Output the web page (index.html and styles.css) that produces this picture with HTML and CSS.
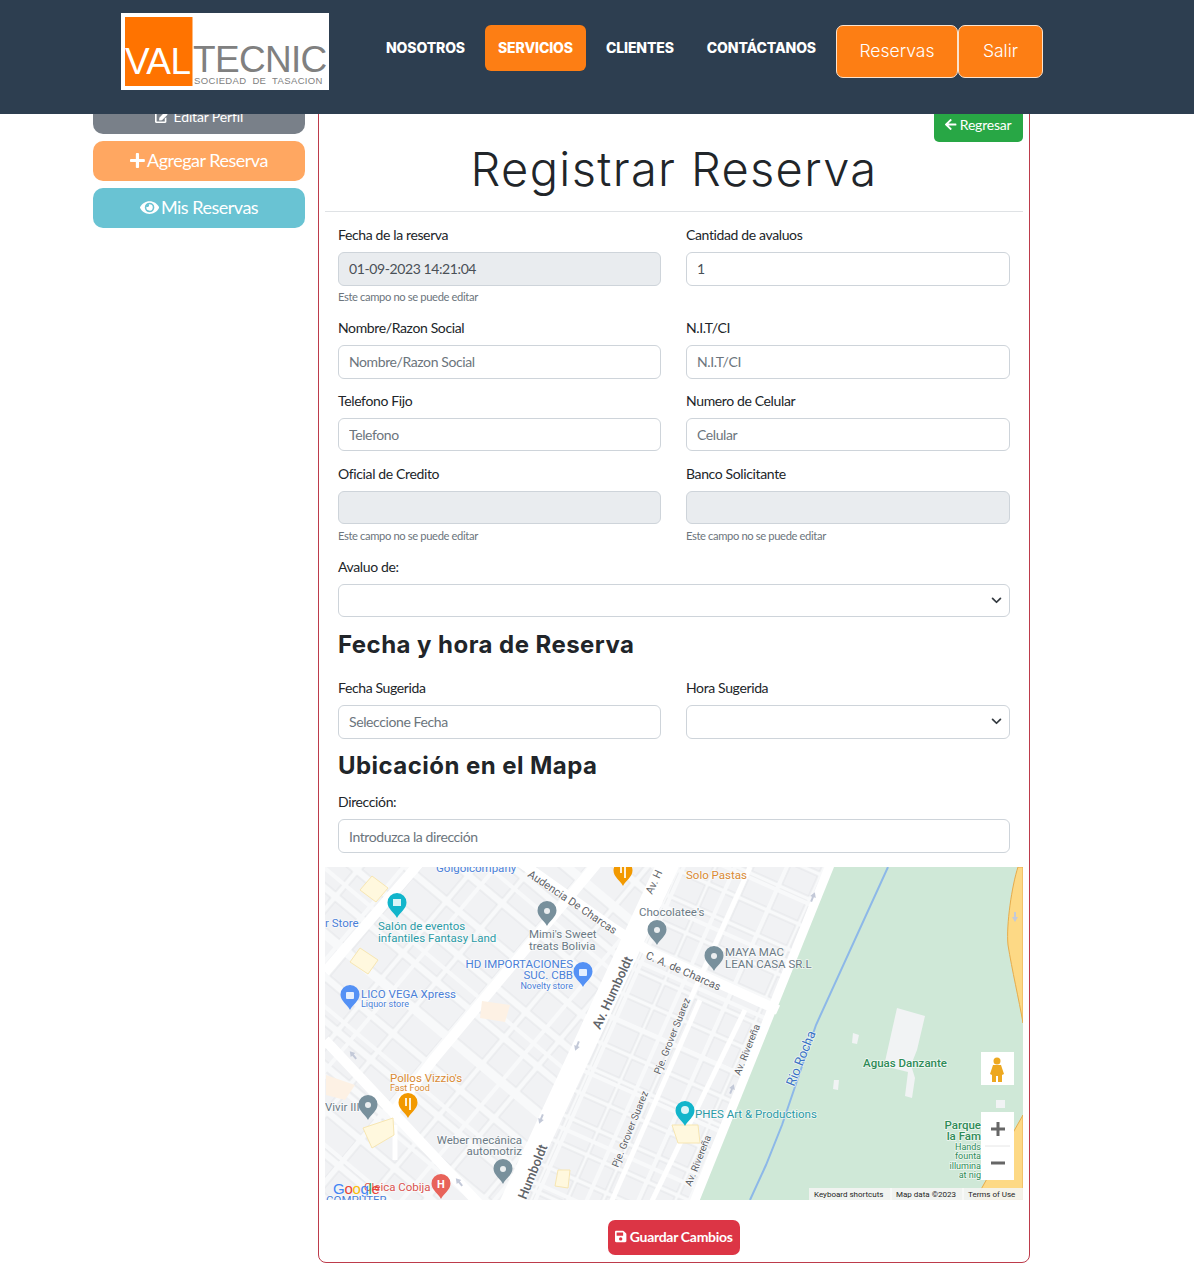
FILE: index.html
```html
<!DOCTYPE html>
<html lang="es">
<head>
<meta charset="utf-8">
<title>Registrar Reserva</title>
<link rel="stylesheet" href="styles.css">
</head>
<body>
<header class="topbar">
  <a class="logo" href="#">
    <span class="logo-mark">VAL</span>
    <span class="logo-word"><span class="logo-name">TECNIC</span><span class="logo-sub">SOCIEDAD DE TASACION</span></span>
  </a>
  <nav class="nav">
    <a class="nav-link" href="#">NOSOTROS</a>
    <a class="nav-link nav-active" href="#">SERVICIOS</a>
    <a class="nav-link" href="#">CLIENTES</a>
    <a class="nav-link" href="#">CONTÁCTANOS</a>
  </nav>
  <div class="session">
    <a class="session-btn session-wide" href="#">Reservas</a>
    <a class="session-btn session-narrow" href="#">Salir</a>
  </div>
</header>

<div class="layout">
  <aside class="sidebar">
    <a class="side-btn side-gray side-small" href="#"><svg class="ico" viewBox="0 0 576 512"><path d="M402.6 83.2l90.2 90.2c3.8 3.8 3.8 10 0 13.8L274.4 405.6l-92.8 10.3c-12.4 1.4-22.9-9.1-21.5-21.5l10.3-92.8L388.8 83.2c3.8-3.8 10-3.8 13.8 0zm162-22.9l-48.8-48.8c-15.2-15.2-39.9-15.2-55.2 0l-35.4 35.4c-3.8 3.8-3.8 10 0 13.8l90.2 90.2c3.8 3.8 10 3.8 13.8 0l35.4-35.4c15.2-15.3 15.2-40 0-55.2zM384 346.2V448H64V128h229.8c3.2 0 6.2-1.3 8.5-3.5l40-40c7.6-7.6 2.2-20.5-8.5-20.5H48C21.5 64 0 85.5 0 112v352c0 26.5 21.5 48 48 48h352c26.5 0 48-21.5 48-48V306.2c0-10.7-12.9-16-20.5-8.5l-40 40c-2.2 2.3-3.5 5.3-3.5 8.5z"/></svg>Editar Perfil</a>
    <a class="side-btn side-orange" href="#"><svg class="ico" viewBox="0 0 448 512"><path d="M416 208H272V64c0-17.67-14.33-32-32-32h-32c-17.67 0-32 14.33-32 32v144H32c-17.67 0-32 14.33-32 32v32c0 17.67 14.33 32 32 32h144v144c0 17.67 14.33 32 32 32h32c17.67 0 32-14.33 32-32V304h144c17.67 0 32-14.33 32-32v-32c0-17.67-14.33-32-32-32z"/></svg>Agregar Reserva</a>
    <a class="side-btn side-teal" href="#"><svg class="ico" viewBox="0 0 576 512"><path d="M572.52 241.4C518.29 135.59 410.93 64 288 64S57.68 135.64 3.48 241.41a32.35 32.35 0 0 0 0 29.19C57.71 376.41 165.07 448 288 448s230.32-71.64 284.52-177.41a32.35 32.35 0 0 0 0-29.19zM288 400a144 144 0 1 1 144-144 143.93 143.93 0 0 1-144 144zm0-240a95.31 95.31 0 0 0-25.31 3.79 47.85 47.85 0 0 1-66.9 66.9A95.78 95.78 0 1 0 288 160z"/></svg>Mis Reservas</a>
  </aside>

  <main class="card">
    <div class="card-top">
      <a class="back-btn" href="#"><svg class="ico" viewBox="0 0 448 512"><path d="M257.5 445.1l-22.2 22.2c-9.4 9.4-24.6 9.4-33.9 0L7 273c-9.4-9.4-9.4-24.6 0-33.9L201.4 44.7c9.4-9.4 24.6-9.4 33.9 0l22.2 22.2c9.5 9.5 9.3 25-.4 34.3L136.6 216H424c13.3 0 24 10.7 24 24v32c0 13.3-10.7 24-24 24H136.6l120.5 114.8c9.8 9.3 10 24.8.4 34.3z"/></svg>Regresar</a>
    </div>
    <h1 class="title">Registrar Reserva</h1>
    <hr class="rule">
    <form class="fields">
      <div class="grid">
        <div class="field">
          <label class="label">Fecha de la reserva</label>
          <input class="input" type="text" value="01-09-2023 14:21:04" readonly>
          <small class="help">Este campo no se puede editar</small>
        </div>
        <div class="field">
          <label class="label">Cantidad de avaluos</label>
          <input class="input" type="text" value="1">
        </div>
        <div class="field">
          <label class="label">Nombre/Razon Social</label>
          <input class="input" type="text" placeholder="Nombre/Razon Social">
        </div>
        <div class="field">
          <label class="label">N.I.T/CI</label>
          <input class="input" type="text" placeholder="N.I.T/CI">
        </div>
        <div class="field">
          <label class="label">Telefono Fijo</label>
          <input class="input" type="text" placeholder="Telefono">
        </div>
        <div class="field">
          <label class="label">Numero de Celular</label>
          <input class="input" type="text" placeholder="Celular">
        </div>
        <div class="field">
          <label class="label">Oficial de Credito</label>
          <input class="input" type="text" readonly>
          <small class="help">Este campo no se puede editar</small>
        </div>
        <div class="field">
          <label class="label">Banco Solicitante</label>
          <input class="input" type="text" readonly>
          <small class="help">Este campo no se puede editar</small>
        </div>
      </div>
      <div class="field">
        <label class="label">Avaluo de:</label>
        <select class="input select"><option></option></select>
      </div>
      <h2 class="subhead subhead-first">Fecha y hora de Reserva</h2>
      <div class="grid">
        <div class="field">
          <label class="label">Fecha Sugerida</label>
          <input class="input" type="text" placeholder="Seleccione Fecha">
        </div>
        <div class="field">
          <label class="label">Hora Sugerida</label>
          <select class="input select"><option></option></select>
        </div>
      </div>
      <h2 class="subhead">Ubicación en el Mapa</h2>
      <div class="field field-last">
        <label class="label">Dirección:</label>
        <input class="input" type="text" placeholder="Introduzca la dirección">
      </div>
    </form>

    <div class="map">
      <svg class="map-svg" viewBox="325 867 698 333" role="img" aria-label="Mapa">
        <defs>
          <pattern id="blocksA" width="44" height="34" patternUnits="userSpaceOnUse" patternTransform="rotate(40 325 867)">
            <rect x="3" y="3" width="38" height="26" class="bld"/>
          </pattern>
          <pattern id="cutsA" width="71" height="53" patternUnits="userSpaceOnUse" patternTransform="rotate(40 325 867)">
            <path d="M0 20H71M30 0V53" class="cut"/>
          </pattern>
          <pattern id="blocksB" width="33" height="27" patternUnits="userSpaceOnUse" patternTransform="rotate(24 700 1000)">
            <rect x="2" y="2" width="29" height="22" class="bld"/>
          </pattern>
          <pattern id="cutsB" width="47" height="61" patternUnits="userSpaceOnUse" patternTransform="rotate(24 700 1000)">
            <path d="M0 14H47M20 0V61" class="cut"/>
          </pattern>
          <clipPath id="mapClip"><rect x="325" y="867" width="698" height="333"/></clipPath>
          <path id="pin" d="M0-12a9.5 9.5 0 0 0-9.5 9.5C-9.5 4-2.5 7.5 0 13 2.5 7.5 9.5 4 9.5-2.5A9.5 9.5 0 0 0 0-12z"/>
          <path id="arrow" d="M0-5L3 0H1V5H-1V0H-3Z"/>
        </defs>
        <g clip-path="url(#mapClip)">
          <rect x="325" y="867" width="698" height="333" class="land"/>
          <polygon points="325,867 680,867 520,1200 325,1200" fill="url(#blocksA)"/>
          <polygon points="325,867 680,867 520,1200 325,1200" fill="url(#cutsA)"/>
          <polygon points="660,867 835,867 700,1200 515,1200" fill="url(#blocksB)"/>
          <polygon points="660,867 835,867 700,1200 515,1200" fill="url(#cutsB)"/>
          <polygon points="832,867 1023,867 1023,1200 695,1200" class="park"/>
          <path d="M1018 867C1012 885 1006 925 1008 945C1012 970 1019 1000 1023 1023V867Z" class="sand"/>
          <path d="M1023 1115L975 1200H1023Z" class="sand"/>
          <path d="M888 867L816 1025L782 1125L766 1165L750 1200" class="river"/>
          <polygon points="897,1008 925,1016 917,1050 911,1065 915,1078 912,1098 905,1096 908,1072 884,1066" class="plaza"/>
          <polygon points="853,1033 859,1035 857,1044 852,1043" class="plaza"/>
          <polygon points="834,1080 839,1080 838,1090 833,1089" class="plaza"/>
          <rect x="996" y="1100" width="9" height="8" class="plaza"/>
          <g class="roads">
            <path d="M670 860L510 1205" class="road-xl"/>
            <path d="M832 860L693 1205" class="road-l"/>
            <path d="M520 862L613 928L650 952L778 1010" class="road-m"/>
            <path d="M600 860L433 1060L395 1110" class="road-m"/>
            <path d="M422 860L325 972" class="road-m"/>
            <path d="M325 1040L480 1205" class="road-m"/>
            <path d="M700 1000L610 1205" class="road-s"/>
            <path d="M745 1010L650 1205" class="road-s"/>
            <path d="M395 1125V1160" class="road-s"/>
            <path d="M750 867L690 1000" class="road-s"/>
          </g>
          <g class="lots">
            <polygon points="372,876 388,888 376,902 360,890"/>
            <polygon points="360,948 378,960 368,974 350,962"/>
            <polygon points="363,1128 393,1118 394,1135 372,1148"/>
            <polygon points="672,1125 698,1125 700,1143 678,1143"/>
            <polygon points="558,1170 570,1170 568,1188 555,1186"/>
          </g>
          <g class="tan">
            <polygon points="482,1001 510,1005 505,1022 480,1018"/>
            <polygon points="326,1075 355,1085 345,1100 326,1095"/>
          </g>
          <g class="arrows">
            <use href="#arrow" transform="translate(813 897) rotate(22)"/>
            <use href="#arrow" transform="translate(1015 917) rotate(180)"/>
            <use href="#arrow" transform="translate(577 1046) rotate(202)"/>
            <use href="#arrow" transform="translate(541 1119) rotate(202)"/>
            <use href="#arrow" transform="translate(353 1055) rotate(-40)"/>
            <use href="#arrow" transform="translate(459 1182) rotate(-40)"/>
            <use href="#arrow" transform="translate(732 1089) rotate(22)"/>
          </g>

          <text class="t t-blue" x="436" y="872">Golgoicompany</text>
          <text class="t t-blue" x="325" y="927">r Store</text>
          <text class="t t-teal" x="378" y="930">Salón de eventos</text>
          <text class="t t-teal" x="378" y="942">infantiles Fantasy Land</text>
          <text class="t t-gray" x="529" y="938">Mimi's Sweet</text>
          <text class="t t-gray" x="529" y="950">treats Bolivia</text>
          <text class="t t-blue" x="573" y="968" text-anchor="end">HD IMPORTACIONES</text>
          <text class="t t-blue" x="573" y="979" text-anchor="end">SUC. CBB</text>
          <text class="t-xs t-blue" x="573" y="989" text-anchor="end">Novelty store</text>
          <text class="t t-blue" x="361" y="998">LICO VEGA Xpress</text>
          <text class="t-xs t-blue" x="361" y="1007">Liquor store</text>
          <text class="t t-orange" x="686" y="879">Solo Pastas</text>
          <text class="t t-gray" x="639" y="916">Chocolatee's</text>
          <text class="t t-gray" x="725" y="956">MAYA MAC</text>
          <text class="t t-gray" x="725" y="968">LEAN CASA SR.L</text>
          <text class="t t-orange" x="390" y="1082">Pollos Vizzio's</text>
          <text class="t-xs t-orange" x="390" y="1091">Fast Food</text>
          <text class="t t-gray" x="325" y="1111">Vivir III</text>
          <text class="t t-gray" x="522" y="1144" text-anchor="end">Weber mecánica</text>
          <text class="t t-gray" x="522" y="1155" text-anchor="end">automotriz</text>
          <text class="t t-red" x="364" y="1191">Cleica Cobija</text>
          <text class="t t-teal" x="695" y="1118">PHES Art &amp; Productions</text>
          <text class="t t-green t-bold" x="863" y="1067">Aguas Danzante</text>
          <text class="t t-green t-bold" x="981" y="1129" text-anchor="end">Parque</text>
          <text class="t t-green t-bold" x="981" y="1140" text-anchor="end">la Fam</text>
          <text class="t-xs t-green" x="981" y="1150" text-anchor="end">Hands</text>
          <text class="t-xs t-green" x="981" y="1159" text-anchor="end">founta</text>
          <text class="t-xs t-green" x="981" y="1169" text-anchor="end">illumina</text>
          <text class="t-xs t-green" x="981" y="1178" text-anchor="end">at nig</text>

          <text class="t-road" transform="translate(527 876) rotate(34)">Audencia De Charcas</text>
          <text class="t-road" transform="translate(652 895) rotate(-65)">Av. H</text>
          <text class="t-road" transform="translate(645 958) rotate(24)">C. A. de Charcas</text>
          <text class="t-road-b" transform="translate(600 1030) rotate(-65)">Av. Humboldt</text>
          <text class="t-road-b" transform="translate(526 1200) rotate(-68)">Humboldt</text>
          <text class="t-road t-sm" transform="translate(660 1075) rotate(-68)">Pje. Grover Suarez</text>
          <text class="t-road t-sm" transform="translate(618 1168) rotate(-68)">Pje. Grover Suarez</text>
          <text class="t-road t-sm" transform="translate(740 1076) rotate(-68)">Av. Rivereña</text>
          <text class="t-road t-sm" transform="translate(691 1187) rotate(-68)">Av. Rivereña</text>
          <text class="t-river" transform="translate(794 1087) rotate(-68)">Rio Rocha</text>

          <use href="#pin" x="397" y="905" class="p-teal"/>
          <rect x="393" y="899" width="8" height="7" class="p-dot"/>
          <use href="#pin" x="547" y="913" class="p-gray"/>
          <circle cx="547" cy="911" r="3" class="p-dot"/>
          <use href="#pin" x="657" y="932" class="p-gray"/>
          <circle cx="657" cy="930" r="3" class="p-dot"/>
          <use href="#pin" x="714" y="958" class="p-gray"/>
          <circle cx="714" cy="956" r="3" class="p-dot"/>
          <use href="#pin" x="583" y="974" class="p-blue"/>
          <rect x="579" y="969" width="8" height="7" rx="1" class="p-dot"/>
          <use href="#pin" x="350" y="997" class="p-blue"/>
          <rect x="346" y="992" width="8" height="7" rx="1" class="p-dot"/>
          <use href="#pin" x="623" y="873" class="p-orange"/>
          <path d="M621 865V873M625 865V878" class="p-fork"/>
          <use href="#pin" x="408" y="1105" class="p-orange"/>
          <path d="M406 1098V1106M410 1098V1110" class="p-fork"/>
          <use href="#pin" x="368" y="1107" class="p-gray"/>
          <circle cx="368" cy="1105" r="3" class="p-dot"/>
          <use href="#pin" x="503" y="1171" class="p-gray"/>
          <circle cx="503" cy="1169" r="3" class="p-dot"/>
          <use href="#pin" x="441" y="1186" class="p-red"/>
          <text class="p-h" x="441" y="1188" text-anchor="middle">H</text>
          <use href="#pin" x="685" y="1113" class="p-teal"/>
          <circle cx="685" cy="1110" r="4" class="p-dot"/>

          <text class="g-logo" x="333" y="1194"><tspan class="g-b">G</tspan><tspan class="g-r">o</tspan><tspan class="g-y">o</tspan><tspan class="g-b">g</tspan><tspan class="g-g">l</tspan><tspan class="g-r">e</tspan></text>
          <text class="t t-blue" x="326" y="1204">COMPUTER</text>

          <rect x="809" y="1188" width="214" height="12" class="attr"/>
          <text class="t-attr" x="814" y="1197">Keyboard shortcuts</text>
          <text class="t-attr" x="896" y="1197">Map data ©2023</text>
          <text class="t-attr" x="968" y="1197">Terms of Use</text>
          <path d="M891 1188V1200M963 1188V1200" class="attr-sep"/>

          <rect x="981" y="1052" width="33" height="33" class="ctl"/>
          <g class="peg">
            <circle cx="997" cy="1061" r="3.5"/>
            <path d="M993 1065H1001L1004 1074L1002 1075V1082H998V1076H996V1082H992V1075L990 1074Z"/>
          </g>
          <rect x="981" y="1112" width="33" height="68" class="ctl"/>
          <path d="M985 1146H1010" class="ctl-sep"/>
          <path d="M998 1122V1136M991 1129H1005M991 1163H1005" class="ctl-ico"/>
        </g>
      </svg>
    </div>

    <div class="actions">
      <button class="save-btn" type="button"><svg class="ico" viewBox="0 0 448 512"><path d="M433.941 129.941l-83.882-83.882A48 48 0 0 0 316.118 32H48C21.49 32 0 53.49 0 80v352c0 26.51 21.49 48 48 48h352c26.51 0 48-21.49 48-48V163.882a48 48 0 0 0-14.059-33.941zM224 416c-35.346 0-64-28.654-64-64 0-35.346 28.654-64 64-64s64 28.654 64 64c0 35.346-28.654 64-64 64zm96-304.52V212c0 6.627-5.373 12-12 12H76c-6.627 0-12-5.373-12-12V108c0-6.627 5.373-12 12-12h228.52c3.183 0 6.235 1.264 8.485 3.515l3.48 3.48A11.996 11.996 0 0 1 320 111.48z"/></svg>Guardar Cambios</button>
    </div>
  </main>
</div>
</body>
</html>
```
FILE: styles.css
```css
* { box-sizing: border-box; }
html, body { margin: 0; padding: 0; }
body { font-family: Lato, "Liberation Sans", sans-serif; font-size: 14px; line-height: 1.5; color: #212529; background: #fff; }
a { text-decoration: none; color: inherit; }

.topbar { position: fixed; top: 0; left: 0; right: 0; height: 114px; background: #2d3e50; display: flex; align-items: flex-start; padding-left: 121px; z-index: 10; }
.logo { margin-top: 13px; width: 208px; height: 77px; background: #fff; display: flex; padding: 4px 2px 4px 4px; flex: none; overflow: hidden; }
.logo-mark { width: 68px; height: 69px; background: #ff7300; color: #fff; font-family: "Liberation Sans", sans-serif; font-size: 37px; line-height: 1; padding-top: 26px; letter-spacing: -0.6px; border-right: 1px solid #fdba80; flex: none; font-weight: 400; }
.logo-word { display: flex; flex-direction: column; color: #808080; font-family: "Liberation Sans", sans-serif; }
.logo-name { font-size: 37px; line-height: 1; padding-top: 24px; letter-spacing: -0.7px; white-space: nowrap; }
.logo-sub { font-size: 9.5px; line-height: 1; letter-spacing: 0.35px; white-space: nowrap; margin-top: -2px; margin-left: 1px; word-spacing: 3px; }

.nav { display: flex; align-items: center; margin-left: 44px; margin-top: 25px; height: 46px; }
.nav-link { font-family: Inter, sans-serif; font-weight: 800; font-size: 14px; color: #fff; padding: 0 13px 2px; height: 46px; display: flex; align-items: center; border-radius: 6px; letter-spacing: -0.12px; margin-right: 7px; }
.nav-active { background: #fd7e14; }
.session { display: flex; margin-top: 25px; }
.session-btn { font-family: Inter, sans-serif; font-weight: 300; font-size: 17.5px; color: #fff; background: #fd7e14; border: 1px solid #fbe3cd; border-radius: 7px; height: 53px; display: flex; align-items: center; justify-content: center; }
.session-wide { width: 122px; }
.session-narrow { width: 85px; }

.layout { display: flex; gap: 13px; padding: 94px 0 16px 93px; align-items: flex-start; }
.sidebar { width: 212px; flex: none; display: flex; flex-direction: column; gap: 7px; }
.side-btn { height: 40px; border-radius: 10px; color: #fff; display: flex; align-items: center; justify-content: center; font-size: 18px; letter-spacing: -0.5px; padding-bottom: 2px; }
.side-btn .ico { height: 17px; width: auto; margin-right: 2px; fill: #fff; }
.side-small { font-size: 14px; letter-spacing: -0.15px; padding: 4px 0 0; }
.side-small .ico { height: 13px; margin-right: 4px; }
.side-gray { background: #798089; }
.side-orange { background: #ffa761; }
.side-teal { background: #69c3d3; }

.card { width: 712px; flex: none; margin-top: 5px; border: 1px solid #bd3b4b; border-radius: 8px; padding: 8px 6px 7px; }
.card-top { display: flex; justify-content: flex-end; height: 34px; }
.back-btn { height: 34px; padding: 0 11.5px 2px; background: #28a745; color: #fff; border-radius: 5px; display: flex; align-items: center; font-size: 14px; letter-spacing: -0.2px; }
.back-btn .ico, .save-btn .ico { height: 13px; width: auto; margin-right: 3px; fill: #fff; }
.title { margin: 0; text-align: center; font-family: Inter, sans-serif; font-weight: 300; font-size: 47px; line-height: 54px; color: #212529; letter-spacing: 1.35px; }
.rule { margin: 15px 0 0; border: 0; border-top: 1px solid #dfe2e5; }

.fields { padding: 12px 13px 14px; }
.grid { display: grid; grid-template-columns: 323px 324px; column-gap: 25px; }
.field { margin-bottom: 11.3px; }
.field-last { margin-bottom: 0; }
.label { display: block; margin-bottom: 7px; font-size: 14px; line-height: 21px; letter-spacing: -0.37px; }
.input { display: block; width: 100%; height: 33.5px; padding: 5px 10px; font-family: Lato, sans-serif; font-size: 14px; line-height: 21px; letter-spacing: -0.4px; color: #495057; background: #fff; border: 1px solid #ced4da; border-radius: 6px; outline: 0; }
.input::placeholder { color: #6c757d; opacity: 1; }
.input[readonly] { background: #e9ecef; }
.select { appearance: none; background-image: url("data:image/svg+xml,%3Csvg xmlns='http://www.w3.org/2000/svg' viewBox='0 0 12 8'%3E%3Cpath d='M1.5 1.5L6 6l4.5-4.5' fill='none' stroke='%23343a40' stroke-width='2' stroke-linecap='round' stroke-linejoin='round'/%3E%3C/svg%3E"); background-repeat: no-repeat; background-position: right 7px center; background-size: 11px 7px; }
.help { display: block; margin-top: 3.5px; font-size: 11.2px; line-height: 16.8px; color: #6c757d; letter-spacing: -0.37px; }
.subhead { margin: 0 0 11px; padding-top: 1.5px; font-family: Inter, sans-serif; font-weight: 700; font-size: 24px; line-height: 29px; color: #212529; letter-spacing: 0.45px; }
.subhead-first { margin-bottom: 18px; }

.map { height: 333px; }
.map-svg { display: block; width: 698px; height: 333px; }
.land { fill: #f8f9fa; }
.bld { fill: #f1f2f4; stroke: #e3e5e8; stroke-width: 1; }
.cut { fill: none; stroke: #f8f9fa; stroke-width: 4; }
.park { fill: #cfe8d7; }
.sand { fill: #fdd985; stroke: #e6ac4c; stroke-width: 1; }
.river { fill: none; stroke: #8db8e8; stroke-width: 2; }
.plaza { fill: #f1f3f4; }
.roads path { fill: none; stroke: #fff; }
.road-xl { stroke-width: 22; }
.road-l { stroke-width: 9; }
.road-m { stroke-width: 10; }
.road-s { stroke-width: 5; }
.lots polygon { fill: #fff8de; stroke: #f7e6b2; }
.tan polygon { fill: #fdf1e4; }
.arrows use { fill: #c3c9d8; }

.t { font-family: Roboto, sans-serif; font-size: 11.5px; }
.t-xs { font-family: Roboto, sans-serif; font-size: 9px; }
.t, .t-xs, .t-road, .t-road-b, .t-river { paint-order: stroke; stroke: rgba(255, 255, 255, .7); stroke-width: 1.5px; }
.t-bold { font-weight: 500; }
.t-blue { fill: #4a80d8; }
.t-teal { fill: #2a9aa6; }
.t-gray { fill: #6b7a85; }
.t-orange { fill: #d98a33; }
.t-red { fill: #d9534f; }
.t-green { fill: #2e8b57; }
.t-road { font-family: Roboto, sans-serif; font-size: 11px; fill: #5f6368; }
.t-road.t-sm { font-size: 10px; }
.t-road-b { font-family: Roboto, sans-serif; font-size: 13px; font-weight: 500; fill: #5f6368; }
.t-river { font-family: Roboto, sans-serif; font-size: 13px; fill: #3b73c4; }
.p-teal { fill: #12b5cb; }
.p-gray { fill: #78909c; }
.p-blue { fill: #5491f5; }
.p-orange { fill: #f29900; }
.p-red { fill: #e8635a; }
.p-dot { fill: #fff; opacity: .85; }
.p-fork { fill: none; stroke: #fff; stroke-width: 2; opacity: .85; }
.p-h { font-family: Roboto, sans-serif; font-size: 11px; font-weight: 700; fill: #fff; }
.g-logo { font-family: "Liberation Sans", sans-serif; font-size: 15px; letter-spacing: -0.3px; }
.g-b { fill: #4285f4; }
.g-r { fill: #ea4335; }
.g-y { fill: #fbbc05; }
.g-g { fill: #34a853; }
.attr { fill: #f3f4f3; opacity: .9; }
.t-attr { font-family: Roboto, sans-serif; font-size: 8px; fill: #1f1f1f; }
.attr-sep { stroke: #fff; stroke-width: 1; }
.ctl { fill: #fff; }
.ctl-sep { stroke: #e6e6e6; stroke-width: 1; }
.ctl-ico { fill: none; stroke: #666; stroke-width: 3; }
.peg { fill: #eda820; }

.actions { display: flex; justify-content: center; padding-top: 20px; }
.save-btn { height: 35px; width: 132px; border: 0; border-radius: 7px; background: #dc3545; color: #fff; font-family: Lato, sans-serif; font-size: 14px; font-weight: 700; display: flex; align-items: center; justify-content: center; padding: 0 0 2px; letter-spacing: -0.3px; }
```
